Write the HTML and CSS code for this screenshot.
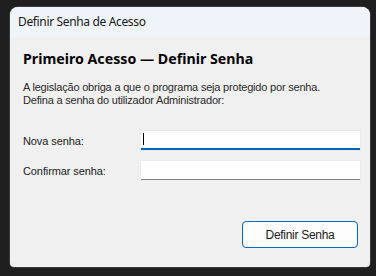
FILE: index.html
```html
<!DOCTYPE html>
<html lang="pt">
<head>
<meta charset="utf-8">
<link rel="stylesheet" href="styles.css">
</head>
<body>
<div class="window">
  <div class="titlebar">Definir Senha de Acesso</div>
  <div class="content">
    <h1 class="heading">Primeiro Acesso — Definir Senha</h1>
    <p class="desc">A legislação obriga a que o programa seja protegido por senha.<br>Defina a senha do utilizador Administrador:</p>
    <div class="form">
      <div class="row">
        <label class="label">Nova senha:</label>
        <div class="field focused"><span class="caret"></span></div>
      </div>
      <div class="row">
        <label class="label">Confirmar senha:</label>
        <div class="field"></div>
      </div>
    </div>
    <div class="actions">
      <button class="btn">Definir Senha</button>
    </div>
  </div>
</div>
</body>
</html>
```
FILE: styles.css
```css
html, body {
  margin: 0;
  padding: 0;
  background: #1f1f1f;
  width: 376px;
  height: 276px;
  overflow: hidden;
}
body {
  padding: 7px 0 0 10px;
  box-sizing: border-box;
}
.window {
  width: 360px;
  height: 260px;
  border-radius: 8px 8px 4px 4px;
  overflow: hidden;
  background: #f0f0f0;
  display: flex;
  flex-direction: column;
  box-shadow: 0 0 0 1px #3a3a3a;
}
.titlebar {
  height: 30px;
  line-height: 30px;
  background: #eff3fa;
  padding-left: 8px;
  font-family: "Noto Sans", "Open Sans", sans-serif;
  font-size: 12px;
  letter-spacing: -0.35px;
  color: #1a1a1a;
  flex: none;
}
.content {
  flex: 1;
  display: flex;
  flex-direction: column;
  padding: 12px 12px 0 13px;
  font-family: "Liberation Sans", Arial, sans-serif;
  color: #1a1a1a;
}
.heading {
  margin: 0;
  font-family: "Noto Sans", "Open Sans", sans-serif;
  font-weight: 700;
  font-size: 14.2px;
  line-height: 20px;
  color: #000;
}
.desc {
  margin: 12px 0 0 0;
  font-size: 11px;
  line-height: 13px;
  letter-spacing: -0.2px;
  color: #2a2a2a;
}
.form {
  display: flex;
  flex-direction: column;
  gap: 11px;
  margin-top: 24px;
}
.row {
  display: flex;
  align-items: center;
}
.label {
  flex: none;
  width: 118px;
  font-size: 11px;
  letter-spacing: -0.1px;
  color: #222;
}
.field {
  flex: none;
  width: 219px;
  height: 18px;
  background: #ffffff;
  border-bottom: 1px solid #868686;
  box-shadow: 0 0 0 1px #ececec;
  position: relative;
}
.field.focused {
  height: 17px;
  border-bottom: 2px solid #0067c0;
}
.caret {
  position: absolute;
  left: 2px;
  top: 2px;
  width: 1px;
  height: 12px;
  background: #000;
}
.actions {
  display: flex;
  justify-content: flex-end;
  margin-top: 41px;
}
.btn {
  width: 116px;
  height: 27px;
  border: 1px solid #0067c0;
  border-radius: 4px;
  background: #fdfdfd;
  font-family: "Liberation Sans", Arial, sans-serif;
  font-size: 12px;
  letter-spacing: -0.3px;
  color: #1a1a1a;
  padding: 0;
}
```
